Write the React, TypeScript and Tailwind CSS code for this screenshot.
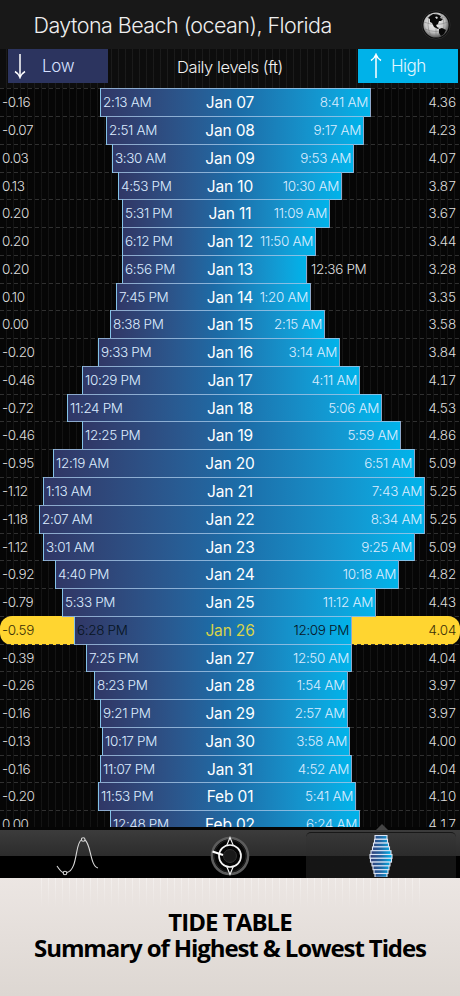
import clsx from "clsx";

interface TideDay {
    date: string;
    low: number;
    lowTime: string;
    high: number;
    highTime: string;
    outside?: boolean;
    today?: boolean;
}

const DAYS: TideDay[] = [
    { date: "Jan 07", low: -0.16, lowTime: "2:13 AM", high: 4.36, highTime: "8:41 AM" },
    { date: "Jan 08", low: -0.07, lowTime: "2:51 AM", high: 4.23, highTime: "9:17 AM" },
    { date: "Jan 09", low: 0.03, lowTime: "3:30 AM", high: 4.07, highTime: "9:53 AM" },
    { date: "Jan 10", low: 0.13, lowTime: "4:53 PM", high: 3.87, highTime: "10:30 AM" },
    { date: "Jan 11", low: 0.2, lowTime: "5:31 PM", high: 3.67, highTime: "11:09 AM" },
    { date: "Jan 12", low: 0.2, lowTime: "6:12 PM", high: 3.44, highTime: "11:50 AM" },
    { date: "Jan 13", low: 0.2, lowTime: "6:56 PM", high: 3.28, highTime: "12:36 PM", outside: true },
    { date: "Jan 14", low: 0.1, lowTime: "7:45 PM", high: 3.35, highTime: "1:20 AM" },
    { date: "Jan 15", low: 0, lowTime: "8:38 PM", high: 3.58, highTime: "2:15 AM" },
    { date: "Jan 16", low: -0.2, lowTime: "9:33 PM", high: 3.84, highTime: "3:14 AM" },
    { date: "Jan 17", low: -0.46, lowTime: "10:29 PM", high: 4.17, highTime: "4:11 AM" },
    { date: "Jan 18", low: -0.72, lowTime: "11:24 PM", high: 4.53, highTime: "5:06 AM" },
    { date: "Jan 19", low: -0.46, lowTime: "12:25 PM", high: 4.86, highTime: "5:59 AM" },
    { date: "Jan 20", low: -0.95, lowTime: "12:19 AM", high: 5.09, highTime: "6:51 AM" },
    { date: "Jan 21", low: -1.12, lowTime: "1:13 AM", high: 5.25, highTime: "7:43 AM" },
    { date: "Jan 22", low: -1.18, lowTime: "2:07 AM", high: 5.25, highTime: "8:34 AM" },
    { date: "Jan 23", low: -1.12, lowTime: "3:01 AM", high: 5.09, highTime: "9:25 AM" },
    { date: "Jan 24", low: -0.92, lowTime: "4:40 PM", high: 4.82, highTime: "10:18 AM" },
    { date: "Jan 25", low: -0.79, lowTime: "5:33 PM", high: 4.43, highTime: "11:12 AM" },
    { date: "Jan 26", low: -0.59, lowTime: "6:28 PM", high: 4.04, highTime: "12:09 PM", today: true },
    { date: "Jan 27", low: -0.39, lowTime: "7:25 PM", high: 4.04, highTime: "12:50 AM" },
    { date: "Jan 28", low: -0.26, lowTime: "8:23 PM", high: 3.97, highTime: "1:54 AM" },
    { date: "Jan 29", low: -0.16, lowTime: "9:21 PM", high: 3.97, highTime: "2:57 AM" },
    { date: "Jan 30", low: -0.13, lowTime: "10:17 PM", high: 4.0, highTime: "3:58 AM" },
    { date: "Jan 31", low: -0.16, lowTime: "11:07 PM", high: 4.04, highTime: "4:52 AM" },
    { date: "Feb 01", low: -0.2, lowTime: "11:53 PM", high: 4.1, highTime: "5:41 AM" },
    { date: "Feb 02", low: 0, lowTime: "12:48 PM", high: 4.17, highTime: "6:24 AM" },
];

// 60px per foot, zero level sits at 110px
const levelToX = (ft: number) => Math.round(109.8 + ft * 60);

function TideRow({ day }: { day: TideDay }) {
    const left = levelToX(day.low);
    const right = levelToX(day.high);

    return (
        <div className="grid h-[27.77px] shrink-0 grid-cols-1 bg-[repeating-linear-gradient(90deg,#303030_0_4px,transparent_4px_7px)] bg-[length:100%_1px] bg-no-repeat">
            <div className="col-start-1 row-start-1 flex text-[13.5px] leading-[28px] font-light tracking-[-0.35px] whitespace-nowrap">
                <div
                    className={clsx(
                        "shrink-0 pl-[2px] tracking-[-0.4px]",
                        day.today ? "rounded-l-[12px] bg-[#ffd530] text-[#3a3008]" : "text-[#dedede]",
                    )}
                    style={{ width: left }}
                >
                    {day.low.toFixed(2)}
                </div>
                <div
                    className={clsx(
                        "relative z-10 flex h-[28.77px] shrink-0 justify-between border border-[#a5c5e6]/80 bg-linear-to-r from-[#303766] via-[#1c6ba6] via-50% to-[#00b3ea] px-[2px] leading-[27px]",
                        day.today ? "text-[#07141f]" : "text-[#dcecff]",
                    )}
                    style={{ width: right - left }}
                >
                    <span>{day.lowTime}</span>
                    {!day.outside && <span>{day.highTime}</span>}
                </div>
                <div
                    className={clsx(
                        "flex grow justify-between pr-[4px] pl-1",
                        day.today ? "rounded-r-[12px] bg-[#ffd530] text-[#3a3008]" : "text-[#dedede]",
                    )}
                >
                    <span>{day.outside && day.highTime}</span>
                    <span className="tracking-[-0.5px] tabular-nums">{day.high.toFixed(2)}</span>
                </div>
            </div>
            <div
                className={clsx(
                    "z-20 col-start-1 row-start-1 text-center text-[15.5px] leading-[29px] tracking-[-0.15px]",
                    day.today ? "text-[#d9d34a]" : "text-white",
                )}
            >
                {day.date}
            </div>
        </div>
    );
}

function Arrow({ className }: { className?: string }) {
    return (
        <svg viewBox="0 0 12 26" className={clsx("h-[26px] w-[12px]", className)} fill="none" stroke="#fff" strokeWidth="1.5">
            <path d="M6 1V24.500M1 18.500Q4.500 20.500 6 24.500Q7.500 20.500 11 18.500" />
        </svg>
    );
}

function Globe() {
    return (
        <svg viewBox="0 0 30 30" className="size-[30px]">
            <defs>
                <radialGradient id="globe" cx="45%" cy="40%" r="60%">
                    <stop offset="0" stopColor="#ffffff" />
                    <stop offset="0.65" stopColor="#c4c4c4" />
                    <stop offset="1" stopColor="#555555" />
                </radialGradient>
            </defs>
            <circle cx="15" cy="15" r="14.2" fill="#0a0a0a" stroke="#333" strokeWidth="0.7" />
            <circle cx="15" cy="15" r="12.6" fill="url(#globe)" />
            <g fill="none" stroke="#777" strokeWidth="0.5">
                <path d="M3 12Q15 17 27 12M4 19Q15 24 26 19M6 7Q15 10 24 7M15 3V27M10 4Q4 15 10 26M20 4Q26 15 20 26" />
            </g>
            <path d="M9 6L12 4L17 4.5L20 6L19 8L22 9L20 11L18 11L17 14L15 15L16 17L18 18L17 19L13 17L11 13L9 12L9 9L7 8Z" fill="#080808" />
            <path d="M18 19L21 18L25 20L23 24L20 26L18 23Z" fill="#080808" />
            <path d="M14 7L16 6.5L17 8L15.500 9Z" fill="#ddd" />
        </svg>
    );
}

function CurveIcon() {
    return (
        <svg viewBox="0 0 44 42" className="h-[42px] w-[44px]" fill="none" stroke="#d8d8d8" strokeWidth="1.1">
            <path d="M2 30C4 33 6 36 8 36.500M12 36.500C23 34 20 6 26.500 4M30 4C36 8 35 30 43 32" />
            <circle cx="10" cy="37" r="1.8" />
            <circle cx="28.200" cy="3.500" r="1.8" />
        </svg>
    );
}

function CompassIcon() {
    return (
        <svg viewBox="0 0 40 40" className="size-[40px]" fill="none">
            <circle cx="20" cy="20" r="18" fill="#050505" stroke="#5c5c5c" strokeWidth="2.6" />
            <circle cx="20" cy="20" r="16" stroke="#202020" />
            <circle cx="20" cy="20" r="6.500" fill="#191919" stroke="#303030" />
            <circle cx="20" cy="20" r="11" stroke="#f4f4f4" strokeWidth="1.7" />
            <path d="M16.500 10L20 1.500L23.500 10M16.500 30L20 38.500L23.500 30" stroke="#f4f4f4" strokeWidth="1.1" />
            <path d="M2.500 15.500L13 19" stroke="#fff" strokeWidth="1.9" />
        </svg>
    );
}

function TableIcon() {
    const widths = [12, 13, 15, 17, 20, 22, 21, 18, 16, 14, 12];
    return (
        <svg viewBox="0 0 24 42" className="h-[42px] w-[24px]">
            <defs>
                <linearGradient id="bars" gradientUnits="userSpaceOnUse" x1="1" y1="0" x2="23" y2="0">
                    <stop offset="0" stopColor="#373c74" />
                    <stop offset="0.5" stopColor="#2166a2" />
                    <stop offset="1" stopColor="#00b8ee" />
                </linearGradient>
            </defs>
            {widths.map((w, i) => (
                <rect key={i} x={12 - w / 2} y={0.5 + i * 3.8} width={w} height="3.8" fill="url(#bars)" stroke="#dbe4f5" strokeWidth="1.1" />
            ))}
        </svg>
    );
}

export default function App() {
    return (
        <div className="flex h-[996px] w-[460px] flex-col overflow-hidden bg-black font-['Inter','Liberation_Sans',sans-serif] text-white">
            <header className="flex h-[49px] shrink-0 items-center justify-between bg-[#181818] pt-[1px] pr-[9px] pl-[33.5px]">
                <h1 className="pt-[1px] text-[21.5px] font-light tracking-[-0.55px] text-[#eeeeee]">Daytona Beach (ocean), Florida</h1>
                <Globe />
            </header>

            <main className="flex h-[778px] shrink-0 flex-col overflow-hidden bg-[#060606] bg-[repeating-linear-gradient(90deg,transparent_0_6px,#ffffff0e_6px_7px)]">
                <div className="flex h-[39.3px] shrink-0 items-start bg-[#ffffff08] pr-[2px] pl-[8px]">
                    <div className="flex h-[33.5px] w-[100px] items-center bg-[#2c345f] text-[17px] font-light tracking-[-0.3px] text-[#d6e0ff]">
                        <Arrow className="ml-[6px]" />
                        <span className="pt-[2px] pl-[16px]">Low</span>
                    </div>
                    <span className="grow pr-[6px] text-center text-[16.5px] leading-[36px] font-light tracking-[-0.4px] text-[#f2f2f2]">Daily levels (ft)</span>
                    <div className="flex h-[33.5px] w-[100px] items-center bg-[#00b2e9] text-[17px] font-light tracking-[-0.5px] text-[#e0f6ff]">
                        <Arrow className="ml-[12px] rotate-180" />
                        <span className="pt-[2px] pl-[9px]">High</span>
                    </div>
                </div>
                {DAYS.map((day) => (
                    <TideRow key={day.date} day={day} />
                ))}
            </main>

            <nav className="relative z-20 flex h-[51px] shrink-0 border-t-[3px] border-[#050505]">
                <div className="flex w-[153px] justify-center bg-linear-to-b from-[#3c3c3c] from-0% via-[#2c2c2c] via-54% to-black to-54% pt-[6px]">
                    <CurveIcon />
                </div>
                <div className="flex w-[153px] justify-center bg-linear-to-b from-[#3c3c3c] from-0% via-[#2c2c2c] via-54% to-black to-54% pt-[6px]">
                    <CompassIcon />
                </div>
                <div className="flex w-[154px] justify-center bg-linear-to-b from-[#3c3c3c] from-0% via-[#2c2c2c] via-54% to-black to-54% pt-[2px] pr-[4px]">
                    <div className="flex w-[150px] justify-center rounded-t-[5px] border-t border-[#181818] bg-linear-to-b from-[#383838] from-0% via-[#2b2b2b] via-52% to-[#151515] to-52% pt-[2px]">
                        <TableIcon />
                    </div>
                </div>
                <svg viewBox="0 0 12 6" className="absolute -top-[6px] left-[376px] h-[6px] w-[12px]">
                    <path d="M0 6L6 0L12 6Z" fill="#444" />
                </svg>
            </nav>

            <footer className="flex h-[118px] shrink-0 flex-col items-center bg-linear-to-b from-[#ece6e3] to-[#ddd7d2] font-['Open_Sans','Noto_Sans',sans-serif] text-black">
                <div className="h-[31px] w-[390px] shrink-0 bg-[repeating-linear-gradient(90deg,transparent_0_6px,#ffffff60_6px_7px)] mask-b-from-0%" />
                <p className="text-[24px] leading-[26px] font-bold tracking-[-0.95px]">TIDE TABLE</p>
                <p className="text-[24px] leading-[25px] font-bold tracking-[-1.1px] whitespace-nowrap">Summary of Highest &amp; Lowest Tides</p>
            </footer>
        </div>
    );
}
